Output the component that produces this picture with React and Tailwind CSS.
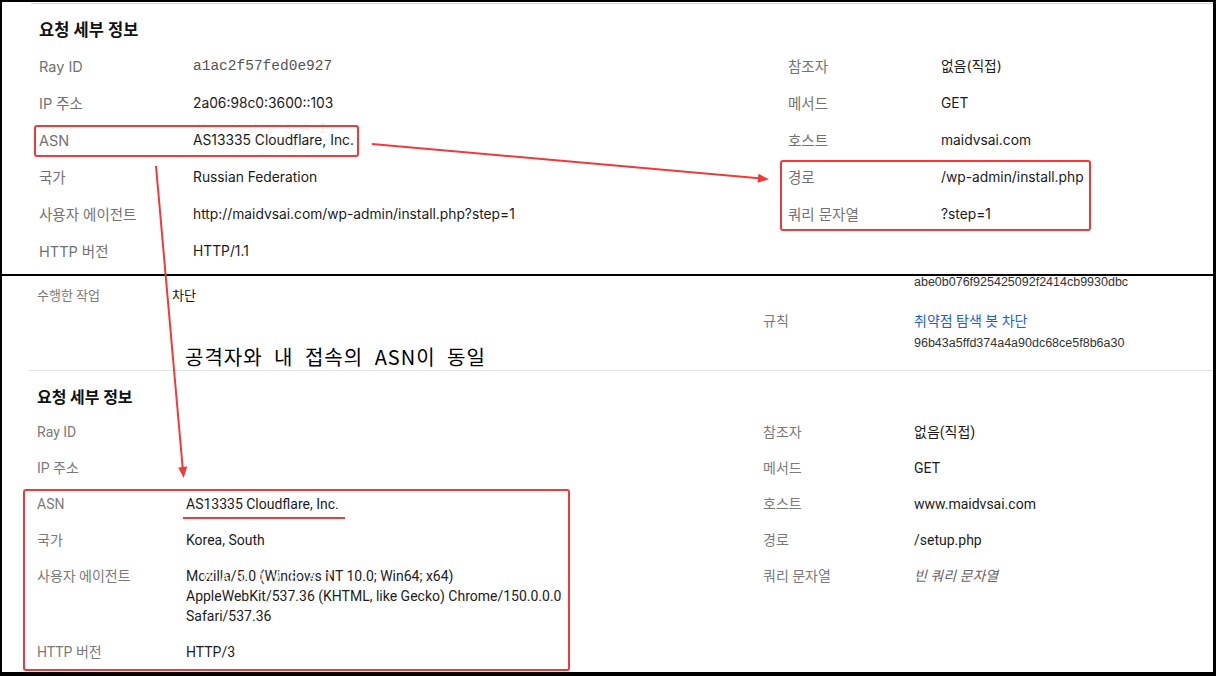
import React from "react";

const RED = "#f03a3a";

const attackerLeft = [
  { label: "Ray ID", value: "a1ac2f57fed0e927", mono: true },
  { label: "IP 주소", value: "2a06:98c0:3600::103" },
  { label: "ASN", value: "AS13335 Cloudflare, Inc." },
  { label: "국가", value: "Russian Federation" },
  { label: "사용자 에이전트", value: "http://maidvsai.com/wp-admin/install.php?step=1" },
  { label: "HTTP 버전", value: "HTTP/1.1" },
];

const attackerRight = [
  { label: "참조자", value: "없음(직접)" },
  { label: "메서드", value: "GET" },
  { label: "호스트", value: "maidvsai.com" },
  { label: "경로", value: "/wp-admin/install.php" },
  { label: "쿼리 문자열", value: "?step=1" },
];

const mineLeft = [
  { label: "Ray ID", value: "" },
  { label: "IP 주소", value: "" },
  { label: "ASN", value: "AS13335 Cloudflare, Inc." },
  { label: "국가", value: "Korea, South" },
  {
    label: "사용자 에이전트",
    value:
      "Mozilla/5.0 (Windows NT 10.0; Win64; x64) AppleWebKit/537.36 (KHTML, like Gecko) Chrome/150.0.0.0 Safari/537.36",
  },
  { label: "HTTP 버전", value: "HTTP/3" },
];

const mineRight = [
  { label: "참조자", value: "없음(직접)" },
  { label: "메서드", value: "GET" },
  { label: "호스트", value: "www.maidvsai.com" },
  { label: "경로", value: "/setup.php" },
  { label: "쿼리 문자열", value: "빈 쿼리 문자열", empty: true },
];

function TopRow({ label, value, mono, labelW }) {
  return (
    <div className="flex py-[8px] leading-[21px]">
      <span className={`${labelW} shrink-0 text-[14.5px] text-[#727272]`}>
        {label}
      </span>
      <span
        className={
          mono
            ? "text-[#555] font-['Liberation_Mono',monospace] text-[14.5px]"
            : "text-[13.8px] text-[#1a1a1a]"
        }
      >
        {value}
      </span>
    </div>
  );
}

function BottomRow({ label, value, empty, labelW, valueW }) {
  return (
    <div className="flex py-[8px] leading-[20px]">
      <span className={`${labelW} shrink-0 text-[#7a7a7a]`}>{label}</span>
      <span
        className={`${valueW} ${empty ? "italic text-[#666]" : "text-[#1c1c1c]"}`}
      >
        {value}
      </span>
    </div>
  );
}

export default function App() {
  return (
    <div className="relative w-[1216px] h-[676px] bg-white overflow-hidden">
      <div className="h-full flex flex-col border-black border-t-2 border-l-2 border-r-[3px] border-b-4">
        {/* 공격자 요청 */}
        <section className="h-[274px] shrink-0 border-b-2 border-black pl-[29px] font-['Inter','Noto_Sans_CJK_KR',sans-serif] text-[14px]">
          <div className="h-full mt-[1px] border-t border-[#d4d4d4] pl-[8px] pt-[14px]">
            <h3 className="text-[16.5px] leading-6 font-semibold text-[#111]">
              요청 세부 정보
            </h3>
            <div className="flex mt-[6px]">
              <div className="w-[749px] shrink-0">
                {attackerLeft.map((r) => (
                  <TopRow key={r.label} {...r} labelW="w-[154px]" />
                ))}
              </div>
              <div className="flex-1">
                {attackerRight.map((r) => (
                  <TopRow key={r.label} {...r} labelW="w-[153px]" />
                ))}
              </div>
            </div>
          </div>
        </section>

        {/* 내 접속 */}
        <section className="flex-1 font-['Roboto','Noto_Sans_CJK_KR',sans-serif] text-[14px]">
          <div className="flex h-[95px] border-b border-[#e2e2e2] ml-[26px]">
            <div className="w-[735px] shrink-0 pl-[9px] flex flex-col">
              <div className="flex mt-[11px] leading-[18px] text-[13px]">
                <span className="w-[135px] text-[#7a7a7a]">수행한 작업</span>
                <span className="text-[#111]">차단</span>
              </div>
              <p className="mt-[40px] pl-[148px] text-[20px] leading-[24px] tracking-[1px] text-black font-['Noto_Sans_CJK_KR',sans-serif] [word-spacing:6px]">
                공격자와 내 접속의 ASN이 동일
              </p>
            </div>
            <div className="flex-1 text-[12.5px]">
              <p className="-mt-[1px] pl-[151px] leading-[14px] text-[#333] font-['Liberation_Sans',sans-serif]">
                abe0b076f925425092f2414cb9930dbc
              </p>
              <div className="flex mt-[21px]">
                <span className="w-[151px] text-[14px] leading-[22px] text-[#7a7a7a]">
                  규칙
                </span>
                <div>
                  <p className="text-[14px] leading-[22px] text-[#1d5fd6]">
                    취약점 탐색 봇 차단
                  </p>
                  <p className="leading-[22px] text-[#333] font-['Liberation_Sans',sans-serif]">
                    96b43a5ffd374a4a90dc68ce5f8b6a30
                  </p>
                </div>
              </div>
            </div>
          </div>

          <div className="pl-[35px] pt-[13px]">
            <h3 className="text-[16px] leading-6 font-semibold text-[#111] font-['Noto_Sans_CJK_KR',sans-serif]">
              요청 세부 정보
            </h3>
            <div className="flex mt-[6px]">
              <div className="w-[726px] shrink-0">
                {mineLeft.map((r) => (
                  <BottomRow
                    key={r.label}
                    {...r}
                    labelW="w-[149px]"
                    valueW="w-[384px]"
                  />
                ))}
              </div>
              <div className="flex-1">
                {mineRight.map((r) => (
                  <BottomRow
                    key={r.label}
                    {...r}
                    labelW="w-[151px]"
                    valueW=""
                  />
                ))}
              </div>
            </div>
          </div>
        </section>
      </div>

      {/* 워터마크 */}
      <span className="absolute left-[197px] top-[119px] text-[14px] tracking-[9px] text-[#f1f1f1] font-['Liberation_Mono',monospace] pointer-events-none">
        MaidVSAI
      </span>
      <span className="absolute left-[203px] top-[568px] text-[14px] tracking-[9px] text-[#f1f1f1] font-['Liberation_Mono',monospace] pointer-events-none">
        MAIDVSAI
      </span>

      {/* 주석 표시 */}
      <svg
        className="absolute inset-0 pointer-events-none"
        width="1216"
        height="676"
        viewBox="0 0 1216 676"
      >
        <g fill="none" stroke={RED} strokeWidth="2">
          <rect x="35" y="126" width="323" height="30" rx="2" />
          <rect x="781" y="161" width="309" height="69" rx="2" />
          <rect x="24" y="490" width="545" height="180" rx="2" />
          <line x1="372" y1="144" x2="759" y2="178.3" />
          <line x1="156" y1="166" x2="182.7" y2="468" />
          <line x1="183" y1="518" x2="345" y2="518" />
        </g>
        <g fill={RED}>
          <polygon points="769,179.3 758.4,173.8 757.6,182.8" />
          <polygon points="183.7,478 187.2,466.6 178.2,467.4" />
        </g>
      </svg>
    </div>
  );
}
